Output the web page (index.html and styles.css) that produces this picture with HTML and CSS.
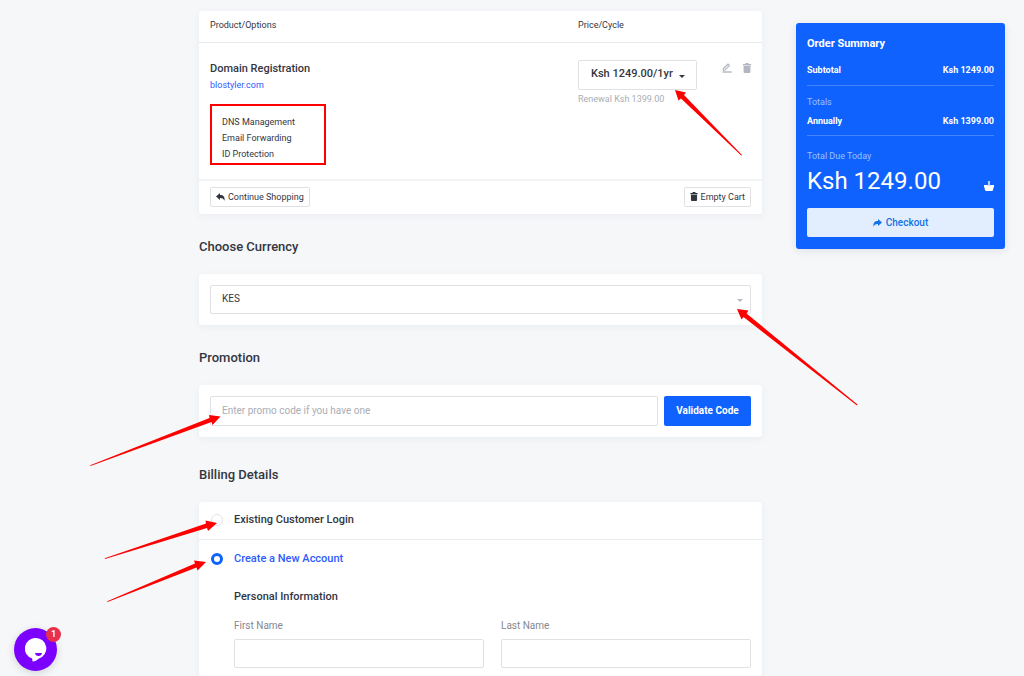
FILE: index.html
```html
<!DOCTYPE html>
<html lang="en">
<head>
<title>Shopping Cart</title>
<meta charset="utf-8">
<meta name="viewport" content="width=device-width, initial-scale=1">
<link rel="stylesheet" href="styles.css">
</head>
<body>
<div class="page">
<main class="main">
	<section class="card cart">
		<table class="cart-table">
			<thead>
				<tr><th class="col-product">Product/Options</th><th class="col-price">Price/Cycle</th><th></th></tr>
			</thead>
			<tbody>
				<tr>
					<td>
						<h3 class="product-name">Domain Registration</h3>
						<a class="domain" href="#">blostyler.com</a>
						<ul class="addons">
							<li>DNS Management</li>
							<li>Email Forwarding</li>
							<li>ID Protection</li>
						</ul>
					</td>
					<td>
						<div class="select-wrap cycle">
							<select class="cycle-select" aria-label="Billing cycle"><option>Ksh 1249.00/1yr</option></select>
						</div>
						<p class="renewal">Renewal Ksh 1399.00</p>
					</td>
					<td>
						<div class="actions">
							<button class="icon-btn" type="button" aria-label="Edit"><svg width="10" height="10" viewBox="0 0 10 10"><path d="M.5 9h9.2" stroke="currentColor" stroke-width="1.4"/><path d="M1.400 7.200V5.600L6 1.200l1.400 1.400-4.600 4.600z" fill="none" stroke="currentColor" stroke-width="1.200"/></svg></button>
							<button class="icon-btn" type="button" aria-label="Remove"><svg width="8" height="10" viewBox="0 0 8 10"><path d="M0 1h2.400V0h3.200v1H8v1.400H0zM.6 3.100h6.800V9q0 1-1 1H1.600q-1 0-1-1z" fill="currentColor"/></svg></button>
						</div>
					</td>
				</tr>
			</tbody>
		</table>
		<div class="cart-footer">
			<button class="btn" type="button"><svg width="9" height="8" viewBox="0 0 9 8"><path d="M0 3.400L4 0v2C7.500 2 9 4 8.500 7.800 7.600 5.600 6.300 4.900 4 4.900V7z" fill="currentColor"/></svg>Continue Shopping</button>
			<button class="btn" type="button"><svg width="8" height="9" viewBox="0 0 8 10"><path d="M0 1h2.400V0h3.200v1H8v1.400H0zM.6 3.100h6.800V9q0 1-1 1H1.600q-1 0-1-1z" fill="currentColor"/></svg>Empty Cart</button>
		</div>
	</section>

	<h2 class="section-title"><label for="currency">Choose Currency</label></h2>
	<section class="card card-body">
		<div class="select-wrap currency">
			<select class="field" id="currency"><option>KES</option></select>
		</div>
	</section>

	<h2 class="section-title"><label for="promo">Promotion</label></h2>
	<section class="card card-body promo">
		<input class="field" id="promo" type="text" placeholder="Enter promo code if you have one">
		<button class="btn-primary" type="button">Validate Code</button>
	</section>

	<h2 class="section-title billing-title">Billing Details</h2>
	<section class="card billing">
		<div class="account-option">
			<input class="radio" type="radio" name="account" id="existing">
			<label for="existing">Existing Customer Login</label>
		</div>
		<div class="account-option new-account">
			<input class="radio" type="radio" name="account" id="create" checked>
			<label for="create">Create a New Account</label>
		</div>
		<div class="personal">
			<h3 class="personal-title">Personal Information</h3>
			<div class="form-row">
				<div class="form-group"><label for="first">First Name</label><input class="field" id="first" type="text"></div>
				<div class="form-group"><label for="last">Last Name</label><input class="field" id="last" type="text"></div>
			</div>
		</div>
	</section>
</main>

<aside class="summary">
	<h2 class="summary-title">Order Summary</h2>
	<div class="line"><span>Subtotal</span><span>Ksh 1249.00</span></div>
	<div class="totals">
		<p class="muted">Totals</p>
		<div class="line"><span>Annually</span><span>Ksh 1399.00</span></div>
	</div>
	<p class="muted">Total Due Today</p>
	<div class="due">
		<span class="due-price">Ksh 1249.00</span>
		<svg class="basket" width="10" height="10" viewBox="0 0 10 10"><path d="M0 4h3.500L5 5.200 6.500 4H10v2.200H9.600L9 9q-.2 1-1.200 1H2.200q-1 0-1.200-1L.4 6.200H0z" fill="#fff"/><path d="M5 0v5" stroke="#fff" stroke-width="1.400"/></svg>
	</div>
	<button class="checkout" type="button"><svg width="9" height="8" viewBox="0 0 9 8"><path d="M9 3.400L5 0v2C1.500 2 0 4 .5 7.800 1.400 5.600 2.700 4.900 5 4.900V7z" fill="currentColor"/></svg>Checkout</button>
</aside>
</div>

<svg class="arrows" width="1024" height="676" viewBox="0 0 1024 676" fill="#f00">
	<path d="M675 90L686 92.500 684 95 742 155 741.200 155.500 681 98.500 678.500 100.500z"/>
	<path d="M737 309L748.500 310.500 746.500 313.500 857.500 404.500 857 405.500 743.500 317 741.500 319.500z"/>
	<path d="M220.500 416.500L212.500 425 211.500 422 90.500 466 90.200 465.300 209.500 418 209 415z"/>
	<path d="M217 523L208 531 207 528 105 559 104.700 558.200 206 523.500 205.500 520.500z"/>
	<path d="M206 562L197.500 570.500 196.500 567.500 107.500 602 107.200 601.300 195 563.500 194 560.500z"/>
</svg>

<button class="chat" type="button" aria-label="Open chat">
	<svg width="22" height="24" viewBox="0 0 22 24"><path d="M11 0a10.500 10.500 0 0 1 3 20.500Q11 23.500 7.500 23.500L7.200 20.500A10.500 10.500 0 0 1 11 0z" fill="#fff"/><path d="M10 15h7q-.5 3-3.500 3T10 15z" fill="#7b00ff"/></svg>
	<span class="badge">1</span>
</button>
</body>
</html>
```
FILE: styles.css
```css
* {
	box-sizing: border-box;
}
body {
	margin: 0;
	background: #f5f7f9;
	color: #33363f;
	font: 9px/12px Roboto, sans-serif;
}
h2, h3, p, ul {
	margin: 0;
	padding: 0;
}
button, input, select {
	font: inherit;
	color: inherit;
	margin: 0;
}
.page {
	display: flex;
	align-items: flex-start;
	gap: 34px;
	min-height: 100vh;
	padding: 11px 19px 0 199px;
}
.main {
	flex: 1;
	display: flex;
	flex-direction: column;
	min-height: calc(100vh - 11px);
}
.card {
	background: #fff;
	border-radius: 3px;
	box-shadow: 0 2px 8px rgba(40, 50, 70, 0.05);
}
.card-body {
	padding: 11px;
}

/* cart */
.cart-table {
	width: 100%;
	border-collapse: collapse;
	table-layout: fixed;
}
.cart-table th {
	height: 31px;
	padding: 0 0 2px 11px;
	text-align: left;
	font-weight: 400;
	border-bottom: 1px solid #e6e8eb;
}
.cart-table td {
	padding: 17px 0 14px 11px;
	vertical-align: top;
}
.cart-table td:last-child {
	padding-right: 11px;
}
.col-product {
	width: 368px;
}
.col-price {
	width: 130px;
}
.product-name {
	font-size: 11px;
	line-height: 17px;
	font-weight: 500;
}
.domain {
	display: block;
	line-height: 16px;
	color: #2d5bff;
	text-decoration: none;
}
.addons {
	width: 116px;
	margin-top: 11px;
	padding: 8px 10px 1px;
	border: 2px solid #f00;
	list-style: none;
	line-height: 16px;
}
.select-wrap {
	position: relative;
}
.select-wrap::after {
	content: "";
	position: absolute;
	right: 8px;
	top: 50%;
	border: 3px solid transparent;
	border-top-color: #b5b8bf;
	border-bottom: 0;
	pointer-events: none;
}
select {
	appearance: none;
}
.cycle {
	width: 119px;
}
.cycle::after {
	right: 12px;
	border-top-color: #33363f;
}
.cycle-select {
	width: 100%;
	height: 30px;
	padding: 0 12px 2px;
	border: 1px solid #dfe1e5;
	border-radius: 2px;
	background: #fff;
	font-size: 11px;
	font-weight: 500;
}
.renewal {
	margin-top: 3px;
	color: #a9adb5;
}
.actions {
	display: flex;
	justify-content: flex-end;
	gap: 11px;
	padding-top: 3px;
}
.icon-btn {
	display: flex;
	padding: 0;
	border: 0;
	background: none;
	color: #b3b7c1;
}
.cart-footer {
	display: flex;
	justify-content: space-between;
	padding: 6px 11px 7px;
	border-top: 2px solid #f3f4f6;
}
.btn {
	display: flex;
	align-items: center;
	gap: 3px;
	height: 20px;
	padding: 0 5px;
	border: 1px solid #dfe1e5;
	border-radius: 2px;
	background: #fff;
}

/* forms */
.section-title {
	padding: 25px 0 19px;
	font-size: 13px;
	line-height: 16px;
	font-weight: 500;
}
.billing-title {
	padding-top: 30px;
}
.field {
	display: block;
	width: 100%;
	height: 29px;
	padding: 0 11px;
	border: 1px solid #dfe1e5;
	border-radius: 2px;
	background: #fff;
	font-size: 10px;
}
.field::placeholder {
	color: #a9adb5;
	opacity: 1;
}
.promo {
	display: flex;
	gap: 6px;
}
.promo .field {
	height: 30px;
}
.btn-primary {
	flex: none;
	width: 87px;
	padding: 0;
	border: 0;
	border-radius: 2px;
	background: #0f62fe;
	color: #fff;
	font-size: 10px;
	font-weight: 700;
}
.billing {
	flex: 1;
}
.account-option {
	display: flex;
	align-items: center;
	gap: 11px;
	height: 38px;
	padding: 0 12px;
	border-bottom: 1px solid #e9ebee;
	font-size: 11px;
	font-weight: 500;
}
.new-account {
	border-bottom: 0;
	color: #2d5bff;
}
.radio {
	appearance: none;
	width: 12px;
	height: 12px;
	border: 1px solid #e1e3e7;
	border-radius: 50%;
	background: #fff;
}
.radio:checked {
	border: 3px solid #0f62fe;
}
.personal {
	padding: 12px 11px 8px 35px;
}
.personal-title {
	font-size: 11px;
	line-height: 14px;
	font-weight: 500;
}
.form-row {
	display: grid;
	grid-template-columns: 1fr 1fr;
	gap: 17px;
	margin-top: 16px;
}
.form-group label {
	display: block;
	margin-bottom: 7px;
	color: #85888f;
	font-size: 10px;
}

/* order summary */
.summary {
	flex: none;
	width: 209px;
	margin-top: 12px;
	padding: 13px 11px 12px;
	border-radius: 3px;
	background: #0f62fe;
	box-shadow: 0 2px 8px rgba(40, 50, 70, 0.1);
	color: #fff;
}
.summary-title {
	margin-bottom: 12px;
	font-size: 11px;
	line-height: 16px;
	font-weight: 700;
}
.line {
	display: flex;
	justify-content: space-between;
	font-weight: 700;
}
.totals {
	margin: 9px 0 14px;
	padding: 10px 0 8px;
	border: 1px solid #4385fe;
	border-width: 1px 0;
}
.totals .line {
	margin-top: 7px;
}
.muted {
	color: #9cc0ff;
}
.due {
	display: flex;
	justify-content: space-between;
	align-items: flex-end;
	margin: 5px 0 13px;
}
.due-price {
	font-size: 24px;
	line-height: 28px;
}
.basket {
	margin-bottom: 4px;
}
.checkout {
	display: flex;
	align-items: center;
	justify-content: center;
	gap: 4px;
	width: 100%;
	height: 29px;
	border: 0;
	border-radius: 2px;
	background: #e2eefd;
	color: #1273e6;
	font-size: 10px;
	font-weight: 500;
}

/* overlays */
.arrows {
	position: absolute;
	left: 0;
	top: 0;
	pointer-events: none;
}
.chat {
	position: fixed;
	left: 14px;
	bottom: 5px;
	display: flex;
	align-items: center;
	justify-content: center;
	width: 43px;
	height: 43px;
	padding: 0;
	border: 0;
	border-radius: 50%;
	background: #7b00ff;
	box-shadow: 0 2px 8px rgba(0, 0, 0, 0.15);
}
.badge {
	position: absolute;
	right: -4px;
	top: -1px;
	width: 15px;
	height: 15px;
	border-radius: 50%;
	background: #e8304a;
	color: #fff;
	font-weight: 700;
	line-height: 15px;
	text-align: center;
}
```
